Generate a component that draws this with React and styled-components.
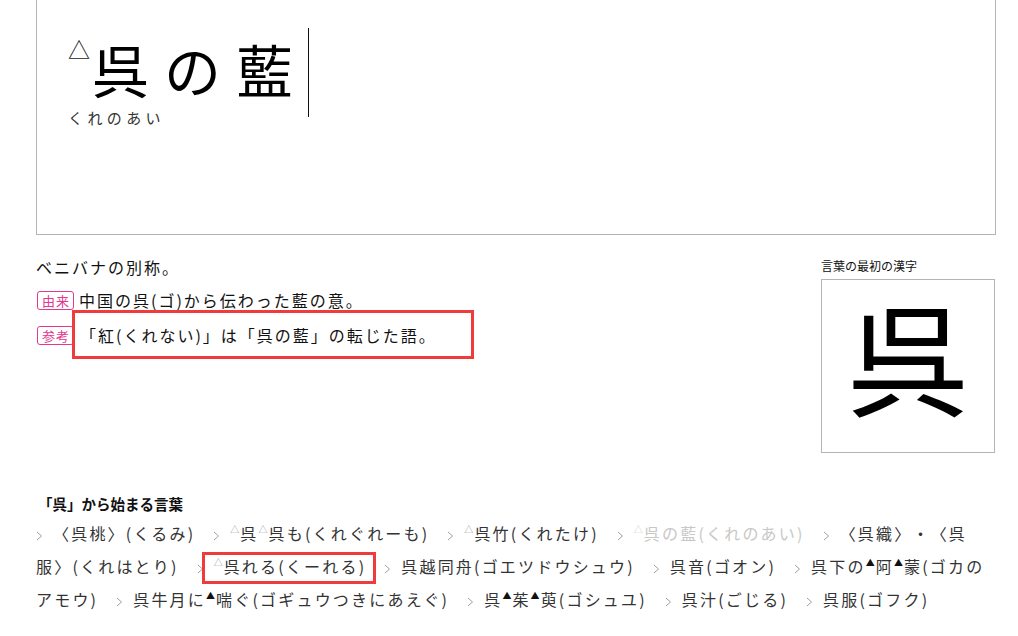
import React from 'react';
import styled, { createGlobalStyle } from 'styled-components';

const GlobalStyle = createGlobalStyle`
  body {
    margin: 0;
    background: #fff;
    font-family: "Noto Sans CJK JP", "Noto Sans", sans-serif;
    color: #222;
    text-spacing-trim: space-all;
  }
`;

const Page = styled.div`
  width: 960px;
  padding: 0 36px;
`;

const TopBox = styled.div`
  height: 235px;
  box-sizing: border-box;
  border: 1px solid #b4b4b4;
  border-top: none;
  padding: 28px 0 0 31px;
`;

const HeadWord = styled.div`
  display: inline-flex;
  flex-direction: column;
`;

const TitleLine = styled.div`
  height: 89px;
  box-sizing: border-box;
  border-right: 1px solid #111;
  padding-top: 12px;
  display: flex;
  align-items: flex-start;
`;

const Title = styled.h1`
  margin: 0;
  font-weight: 400;
  font-size: 57px;
  line-height: 1;
  letter-spacing: 15px;
  color: #000;
`;

const TitleMark = styled.span`
  font-size: 22px;
  line-height: 1;
  margin: -3px 2px 0 0;
`;

const Mark = styled.span`
  display: inline-block;
  font-size: 9px;
  line-height: 0;
  letter-spacing: 0;
  vertical-align: 0.75em;
  margin-right: 1px;
  color: ${({ color }) => color};
`;

const Reading = styled.div`
  margin-top: -10px;
  font-size: 15px;
  letter-spacing: 4.4px;
  color: #333;
`;

const Main = styled.div`
  display: flex;
  justify-content: space-between;
  margin-top: 16px;
`;

const Defs = styled.div`
  display: flex;
  flex-direction: column;
  font-size: 16px;
  letter-spacing: 2px;
  line-height: 33px;
  color: #111;
`;

const DefRow = styled.div`
  display: flex;
  align-items: center;
  height: ${({ tall }) => (tall ? 36 : 33)}px;
`;

const Tag = styled.span`
  display: inline-block;
  font-size: 13px;
  line-height: 17px;
  letter-spacing: 1px;
  padding: 0 3px 0 4px;
  margin: 0 5px 0 1px;
  border: 1px solid #e2388e;
  border-radius: 3px;
  color: #e2388e;
`;

const Boxed = styled.span`
  position: relative;
  padding-left: ${({ pad }) => pad || 0}px;

  &::after {
    content: '';
    position: absolute;
    left: ${({ left }) => left}px;
    right: ${({ right }) => right}px;
    top: ${({ top }) => top}px;
    bottom: ${({ bottom }) => bottom}px;
    border: 3px solid #ef3b3b;
    pointer-events: none;
  }
`;

const KanjiPanel = styled.div`
  width: 175px;
  display: flex;
  flex-direction: column;
  margin-top: 7px;
`;

const PanelLabel = styled.div`
  font-size: 12px;
  line-height: 16px;
  color: #111;
  margin-bottom: 5px;
`;

const KanjiBox = styled.div`
  width: 174px;
  height: 174px;
  box-sizing: border-box;
  border: 1px solid #b4b4b4;
  padding-bottom: 24px;
  display: flex;
  align-items: center;
  justify-content: center;
  font-size: 122px;
  line-height: 1;
  color: #000;
`;

const Related = styled.section`
  margin-top: 40px;
`;

const RelatedTitle = styled.h2`
  margin: 0;
  padding-left: 2px;
  font-size: 14.5px;
  font-weight: 700;
  line-height: 22px;
  color: #111;
`;

const WordList = styled.div`
  font-size: 16px;
  line-height: 33px;
  letter-spacing: 2.2px;
  color: #333;
  margin-top: 2px;
`;

const Word = styled.span`
  margin-right: 18px;
  color: ${({ current }) => (current ? '#c8c8c8' : '#333')};
`;

const ChevronIcon = styled.svg`
  width: 7px;
  height: 10px;
  margin-right: 10px;
  vertical-align: -1px;
`;

const Chevron = () => (
  <ChevronIcon viewBox="0 0 7 10">
    <path d="M1 1l4.5 4L1 9" fill="none" stroke="#a0a0a0" strokeWidth="1" />
  </ChevronIcon>
);

const Tri = ({ filled, color }) => (
  <Mark color={filled ? '#111' : color || '#999'}>{filled ? '▲' : '△'}</Mark>
);

const words = [
  { id: 1, text: <>〈呉桃〉(くるみ)</> },
  { id: 2, text: <><Tri />呉<Tri />呉も(くれぐれーも)</> },
  { id: 3, text: <><Tri />呉竹(くれたけ)</> },
  { id: 4, current: true, text: <><Tri color="#ccc" />呉の藍(くれのあい)</> },
  { id: 5, text: <>〈呉織〉・〈呉服〉(くれはとり)</> },
  { id: 6, boxed: true, text: <><Tri />呉れる(くーれる)</> },
  { id: 7, text: <>呉越同舟(ゴエツドウシュウ)</> },
  { id: 8, text: <>呉音(ゴオン)</> },
  { id: 9, text: <>呉下の<Tri filled />阿<Tri filled />蒙(ゴカのアモウ)</> },
  { id: 10, text: <>呉牛月に<Tri filled />喘ぐ(ゴギュウつきにあえぐ)</> },
  { id: 11, text: <>呉<Tri filled />茱<Tri filled />萸(ゴシュユ)</> },
  { id: 12, text: <>呉汁(ごじる)</> },
  { id: 13, text: <>呉服(ゴフク)</> },
];

const App = () => (
  <Page>
    <GlobalStyle />
    <TopBox>
      <HeadWord>
        <TitleLine>
          <TitleMark>△</TitleMark>
          <Title>呉の藍</Title>
        </TitleLine>
        <Reading>くれのあい</Reading>
      </HeadWord>
    </TopBox>

    <Main>
      <Defs>
        <DefRow>ベニバナの別称。</DefRow>
        <DefRow>
          <Tag>由来</Tag>中国の呉(ゴ)から伝わった藍の意。
        </DefRow>
        <DefRow tall>
          <Tag>参考</Tag>
          <Boxed pad={1} left={-7} right={-37} top={-9} bottom={-7}>
            「紅(くれない)」は「呉の藍」の転じた語。
          </Boxed>
        </DefRow>
      </Defs>
      <KanjiPanel>
        <PanelLabel>言葉の最初の漢字</PanelLabel>
        <KanjiBox>呉</KanjiBox>
      </KanjiPanel>
    </Main>

    <Related>
      <RelatedTitle>「呉」から始まる言葉</RelatedTitle>
      <WordList>
        {words.map((w) => (
          <Word key={w.id} current={w.current}>
            <Chevron />
            {w.boxed ? (
              <Boxed left={-12} right={-10} top={-2} bottom={-6}>
                {w.text}
              </Boxed>
            ) : (
              w.text
            )}
          </Word>
        ))}
      </WordList>
    </Related>
  </Page>
);

export default App;
